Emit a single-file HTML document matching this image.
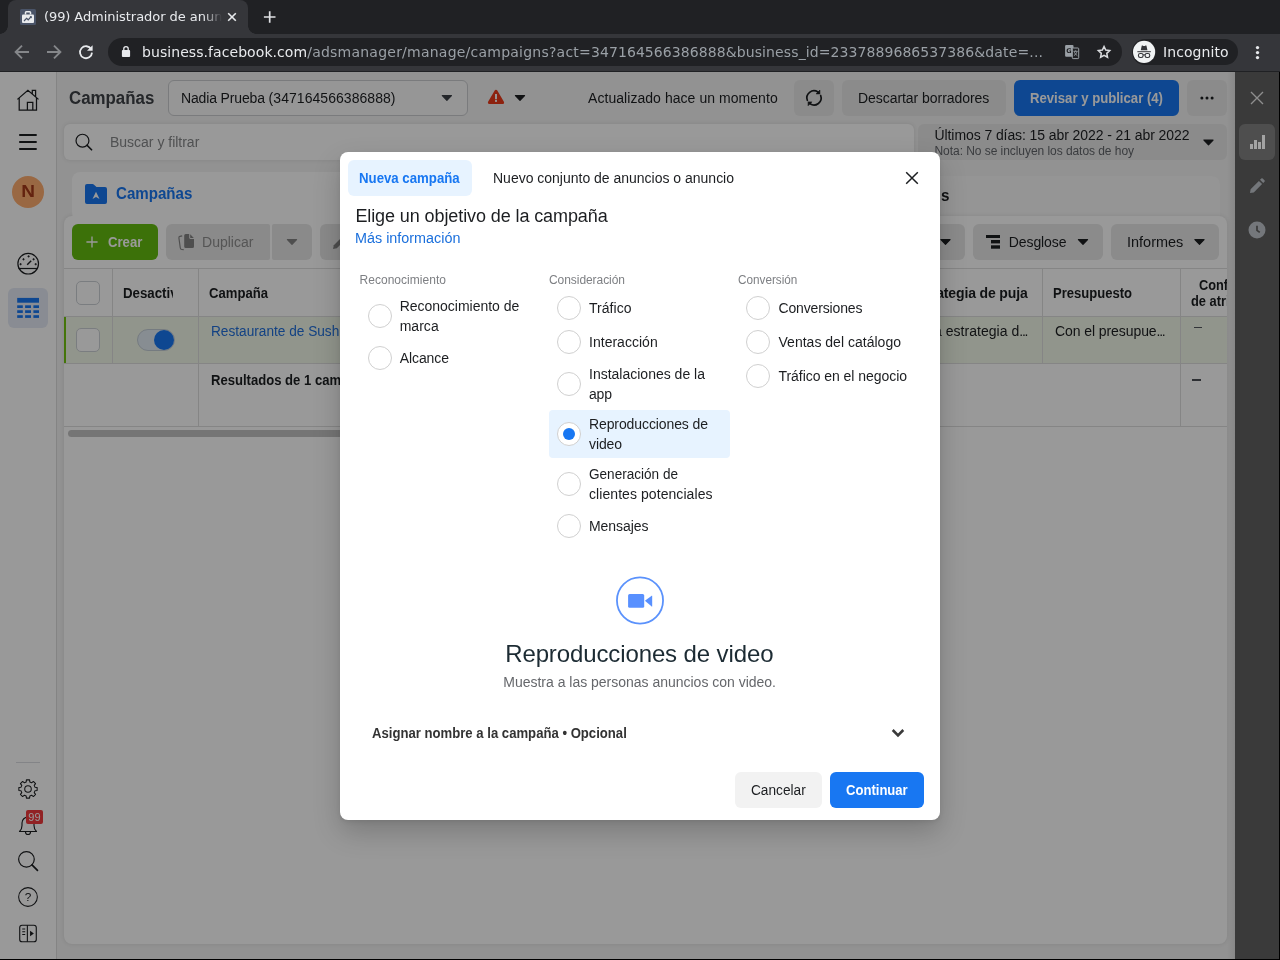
<!DOCTYPE html>
<html lang="es"><head><meta charset="utf-8"><title>(99) Administrador de anuncios</title>
<style>
*{box-sizing:border-box;margin:0;padding:0}
html,body{width:1280px;height:960px;overflow:hidden;background:#999;font-family:"Liberation Sans",sans-serif}
.a{position:absolute}
svg{position:absolute;overflow:visible}
#chrome{position:absolute;left:0;top:0;width:1280px;height:72px;background:#35363a;font-family:"DejaVu Sans",sans-serif}
#tabstrip{position:absolute;left:0;top:0;width:1280px;height:34px;background:#202124}
#tab{position:absolute;left:8px;top:0;width:240px;height:34px;background:#35363a;border-radius:8px 8px 0 0}
#tab:before,#tab:after{content:"";position:absolute;bottom:0;width:8px;height:8px}
#tab:before{left:-8px;background:radial-gradient(circle at 0 0,transparent 7.5px,#35363a 8px)}
#tab:after{right:-8px;background:radial-gradient(circle at 100% 0,transparent 7.5px,#35363a 8px)}
#omni{position:absolute;left:108px;top:38px;width:1014px;height:28px;border-radius:14px;background:#202124}
#incog{position:absolute;left:1132px;top:39px;width:106px;height:26px;border-radius:13px;background:#202124}
#chromeline{position:absolute;left:0;top:71px;width:1280px;height:1px;background:#202124}
#page{position:absolute;left:0;top:0;width:1279px;height:959px;overflow:hidden;background:#f3f3f3}
#overlay{position:absolute;left:0;top:72px;width:1279px;height:887px;background:rgba(0,0,0,.4)}
#edge-b{position:absolute;left:0;top:959px;width:1280px;height:1px;background:#000}
#edge-r{position:absolute;left:1279px;top:72px;width:1px;height:888px;background:#000}
.box{position:absolute}
#root{position:absolute;left:0;top:0;width:1280px;height:960px;overflow:hidden;-webkit-mask-image:linear-gradient(#000,#000);mask-image:linear-gradient(#000,#000)}
#modal{position:absolute;left:340px;top:152px;width:600px;height:668px;border-radius:8px;background:#fff;box-shadow:0 12px 28px rgba(0,0,0,.2),0 2px 4px rgba(0,0,0,.08)}
.radio{width:24px;height:24px;border-radius:50%;border:1px solid #d0d0d0;background:#fff}
#side{position:absolute;left:0;top:72px;width:57px;height:887px;background:#fff;border-right:1px solid #dcdcdc}
.btn{border-radius:6px;background:#e8e8e8}
.dis{background:#e6e6e6}
.card{background:#fff;box-shadow:0 0 4px rgba(0,0,0,.1)}
.hl{height:1px;background:#dedede}
.vl{width:1px;background:#dedede}
.cb{width:24px;height:24px;border-radius:5px;border:1px solid #ccd0d5;background:#fff}
#rside{position:absolute;left:1235px;top:72px;width:44px;height:887px;background:#3a3a3a}
#rshadow{position:absolute;left:1227px;top:72px;width:8px;height:887px;background:linear-gradient(90deg,rgba(0,0,0,0),rgba(0,0,0,.07))}

</style></head>
<body>
<div id="root">
<div id="page">
<div id="side"></div>
<svg style="left:17px;top:89px" width="22" height="22"><path d="M.4 10.4L10.9 1.3 21.5 10.4M2.2 8.9V21.2H19.5V8.9M15.3 5V1.3H18.6V7.8M10.4 21.2V13.4H15.8V21.2" fill="none" stroke="#1c1e21" stroke-width="1.25" stroke-linejoin="miter"/></svg>
<svg style="left:19px;top:134px" width="18" height="16"><path d="M.2 1H17.7M.2 8H17.7M.2 15H17.7" stroke="#1c1e21" stroke-width="1.9"/></svg>
<div class="a" style="left:12px;top:176px;width:32px;height:32px;border-radius:50%;background:#ffae70"></div>
<span style="position:absolute;left:21.8px;top:181.109px;font:700 17px/22px 'Liberation Sans',sans-serif;color:#a63a1a;white-space:pre;transform:scaleX(1.12);transform-origin:50% 50%;width:12.5px;text-align:center;">N</span>
<svg style="left:16px;top:251px" width="25" height="25"><g transform="translate(0.2 0.7)"><circle cx="12" cy="12" r="10.3" fill="none" stroke="#1c1e21" stroke-width="1.2"/><path d="M2.3 16.8h19.4" stroke="#1c1e21" stroke-width="1.2"/><path d="M11 13l4-3.9" stroke="#1c1e21" stroke-width="1.4"/><path d="M3.3 12.5h2.2M4.4 11.4v2.2" stroke="#1c1e21" stroke-width=".9"/><path d="M6.2 7.6h2.2M7.3 6.5v2.2" stroke="#1c1e21" stroke-width=".9"/><path d="M11.3 4.7h2.2M12.4 3.6v2.2" stroke="#1c1e21" stroke-width=".9"/><path d="M16.3 7.6h2.2M17.4 6.5v2.2" stroke="#1c1e21" stroke-width=".9"/><path d="M18.4 12.5h2.2M19.5 11.4v2.2" stroke="#1c1e21" stroke-width=".9"/></g></svg>
<div class="a" style="left:8px;top:288px;width:40px;height:40px;border-radius:6px;background:#e5eaf5"></div>
<svg style="left:17px;top:297px" width="23" height="21"><g transform="translate(0.2 0.9)"><rect x="0" y="0" width="21.8" height="4.8" fill="#1877f2"/><rect x="0" y="7.4" width="5.6" height="2.7" fill="#1877f2"/><rect x="7.9" y="7.4" width="5.9" height="2.7" fill="#1877f2"/><rect x="16.2" y="7.4" width="5.6" height="2.7" fill="#1877f2"/><rect x="0" y="12.35" width="5.6" height="2.7" fill="#1877f2"/><rect x="7.9" y="12.35" width="5.9" height="2.7" fill="#1877f2"/><rect x="16.2" y="12.35" width="5.6" height="2.7" fill="#1877f2"/><rect x="0" y="17.3" width="5.6" height="2.7" fill="#1877f2"/><rect x="7.9" y="17.3" width="5.9" height="2.7" fill="#1877f2"/><rect x="16.2" y="17.3" width="5.6" height="2.7" fill="#1877f2"/></g></svg>
<div class="a" style="left:16px;top:762px;width:24px;height:1px;background:#dadde1"></div>
<svg style="left:18px;top:779px" width="20" height="20"><g transform="scale(0.909)"><path d="M8.97 3.37L9.27 0.95L12.73 0.95L13.03 3.37L14.96 4.17L16.89 2.67L19.33 5.11L17.83 7.04L18.63 8.97L21.05 9.27L21.05 12.73L18.63 13.03L17.83 14.96L19.33 16.89L16.89 19.33L14.96 17.83L13.03 18.63L12.73 21.05L9.27 21.05L8.97 18.63L7.04 17.83L5.11 19.33L2.67 16.89L4.17 14.96L3.37 13.03L0.95 12.73L0.95 9.27L3.37 8.97L4.17 7.04L2.67 5.11L5.11 2.67L7.04 4.17Z" fill="none" stroke="#1c1e21" stroke-width="1.15" stroke-linejoin="round"/><circle cx="11" cy="11" r="3.6" fill="none" stroke="#1c1e21" stroke-width="1.15"/></g></svg>
<svg style="left:18px;top:814px" width="20" height="22"><path d="M1.5 17.5c1.8-1.6 2.5-3.5 2.5-6V9a6 6 0 0 1 12 0v2.5c0 2.5.7 4.4 2.5 6z" fill="none" stroke="#1c1e21" stroke-width="1.15" stroke-linejoin="round"/><path d="M7.5 18a2.5 2.5 0 0 0 5 0" fill="none" stroke="#1c1e21" stroke-width="1.15"/></svg>
<div class="a" style="left:26px;top:810px;width:17px;height:14px;border-radius:2px;background:#f23a3c"></div>
<span style="position:absolute;left:28.3px;top:811.389px;font:400 11px/12px 'Liberation Sans',sans-serif;letter-spacing:0.15px;color:#fff;white-space:pre;">99</span>
<svg style="left:18px;top:850px" width="20" height="21"><g transform="translate(0 0.9) scale(0.909)"><circle cx="9.3" cy="9.3" r="8.6" fill="none" stroke="#1c1e21" stroke-width="1.32"/><path d="M15.4 15.4l6 6" stroke="#1c1e21" stroke-width="1.87" stroke-linecap="round"/></g></svg>
<svg style="left:18px;top:887px" width="20" height="20"><g transform="scale(0.909)"><circle cx="11" cy="11" r="10.3" fill="none" stroke="#1c1e21" stroke-width="1.15"/><text x="11" y="15.5" text-anchor="middle" font-family="Liberation Sans,sans-serif" font-size="13" fill="#1c1e21">?</text></g></svg>
<svg style="left:19px;top:924px" width="18" height="19"><g transform="translate(0 0.5) scale(0.9)"><rect x=".8" y=".8" width="18.4" height="18.4" rx="2.6" fill="none" stroke="#1c1e21" stroke-width="1.25"/><path d="M9.3 .8v18.4" stroke="#1c1e21" stroke-width="1.25"/><path d="M3.6 5h3.3M3.6 8h3.3M3.6 11h3.3" stroke="#1c1e21" stroke-width="1.15"/><path d="M12.3 6.9l4.2 3.1-4.2 3.1z" fill="#1c1e21"/></g></svg>
<span style="position:absolute;left:69px;top:86.663px;font:700 18px/23px 'Liberation Sans',sans-serif;transform:scaleX(0.9369);transform-origin:0 50%;color:#3e4247;white-space:pre;">Campañas</span>
<div class="a" style="left:168px;top:80px;width:300px;height:36px;border-radius:6px;border:1px solid #cbcdd0;background:#fbfbfb"></div>
<div style="position:absolute;left:181px;top:89.149px;font:400 14px/18px 'Liberation Sans',sans-serif;white-space:pre;"><span style="color:#1c1e21;letter-spacing:-0.147px">Nadia Prueba </span><span style="color:#1c1e21;letter-spacing:0.051px">(347164566386888)</span></div>
<svg style="left:441px;top:94px" width="12" height="8"><g transform="translate(0.6 0.9)"><path d="M.7 .6H9.9L5.3 5.5z" fill="#3c4047" stroke="#3c4047" stroke-width="1.1" stroke-linejoin="round"/></g></svg>
<svg style="left:487px;top:89px" width="18" height="16"><g transform="translate(0.9 0.7)"><path d="M8.1 1.5L14.7 12.9H1.5z" fill="#ec3a1a" stroke="#ec3a1a" stroke-width="3" stroke-linejoin="round"/><path d="M8.1 4.3v5.2" stroke="#fff" stroke-width="1.9"/><rect x="7.15" y="10.3" width="1.9" height="1.9" fill="#fff"/></g></svg>
<svg style="left:514px;top:94px" width="12" height="8"><g transform="translate(0.7 0.9)"><path d="M.7 .6H9.9L5.3 5.5z" fill="#1c1e21" stroke="#1c1e21" stroke-width="1.1" stroke-linejoin="round"/></g></svg>
<span style="position:absolute;left:588px;top:89.149px;font:400 14px/18px 'Liberation Sans',sans-serif;letter-spacing:0.052px;color:#1c1e21;white-space:pre;">Actualizado hace un momento</span>
<div class="a btn" style="left:794px;top:80px;width:40px;height:36px"></div>
<svg style="left:805px;top:89px" width="18" height="18"><path d="M2.33 11.33A7.1 7.1 0 0 1 12.92 2.98M15.67 6.47A7.1 7.1 0 0 1 5.08 14.82" fill="none" stroke="#1c1e21" stroke-width="1.7" stroke-linecap="round"/><path d="M14.9 1.1V4.9H11.1zM3.1 16.7V12.9H6.9z" fill="#1c1e21" stroke="#1c1e21" stroke-width=".6" stroke-linejoin="round"/></svg>
<div class="a btn" style="left:842px;top:80px;width:164px;height:36px"></div>
<span style="position:absolute;left:858px;top:89.149px;font:400 14px/18px 'Liberation Sans',sans-serif;letter-spacing:-0.052px;color:#1c1e21;white-space:pre;">Descartar borradores</span>
<div class="a" style="left:1014px;top:80px;width:165px;height:36px;border-radius:6px;background:#1877f2"></div>
<span style="position:absolute;left:1030px;top:89.149px;font:700 14px/18px 'Liberation Sans',sans-serif;transform:scaleX(0.9391);transform-origin:0 50%;color:#fff;white-space:pre;">Revisar y publicar (4)</span>
<div class="a btn" style="left:1187px;top:80px;width:40px;height:36px"></div>
<svg style="left:1199px;top:96px" width="16" height="4"><circle cx="2.9" cy="2" r="1.5" fill="#1c1e21"/><circle cx="8" cy="2" r="1.5" fill="#1c1e21"/><circle cx="13.1" cy="2" r="1.5" fill="#1c1e21"/></svg>
<div class="a card" style="left:64px;top:124px;width:850px;height:36px;border-radius:6px"></div>
<svg style="left:75px;top:133px" width="17" height="18"><g transform="translate(0.5 0.7) scale(0.75)"><circle cx="9.3" cy="9.3" r="8.6" fill="none" stroke="#1c1e21" stroke-width="1.6"/><path d="M15.4 15.4l6 6" stroke="#1c1e21" stroke-width="2.27" stroke-linecap="round"/></g></svg>
<span style="position:absolute;left:110px;top:133.149px;font:400 14px/18px 'Liberation Sans',sans-serif;letter-spacing:-0.011px;color:#858789;white-space:pre;">Buscar y filtrar</span>
<div class="a btn" style="left:918px;top:124px;width:309px;height:36px"></div>
<span style="position:absolute;left:934.5px;top:126.449px;font:400 14px/18px 'Liberation Sans',sans-serif;letter-spacing:-0.085px;color:#1c1e21;white-space:pre;">Últimos 7 días: 15 abr 2022 - 21 abr 2022</span>
<span style="position:absolute;left:934.5px;top:142.842px;font:400 12px/16px 'Liberation Sans',sans-serif;letter-spacing:-0.054px;color:#62656a;white-space:pre;">Nota: No se incluyen los datos de hoy</span>
<svg style="left:1203px;top:139px" width="11" height="7"><g transform="translate(0.2 0.4)"><path d="M.7 .6H9.9L5.3 5.5z" fill="#1c1e21" stroke="#1c1e21" stroke-width="1.1" stroke-linejoin="round"/></g></svg>
<div class="a" style="left:72px;top:176px;width:1148px;height:48px;border-radius:8px 8px 0 0;background:#f8f8f8"></div>
<div class="a" style="left:72px;top:172px;width:383px;height:52px;border-radius:8px 8px 0 0;background:#fff"></div>
<svg style="left:85px;top:184px" width="22" height="20"><path d="M0 2a2 2 0 0 1 2-2h5.5a2 2 0 0 1 1.5.7L11.5 3H20a2 2 0 0 1 2 2v13a2 2 0 0 1-2 2H2a2 2 0 0 1-2-2z" fill="#1877f2"/><path d="M7.5 15L11 7.7l3.5 7.3-3.5-1.9z" fill="#fff"/></svg>
<span style="position:absolute;left:116px;top:182.756px;font:700 16px/21px 'Liberation Sans',sans-serif;transform:scaleX(0.9429);transform-origin:0 50%;color:#1877f2;white-space:pre;">Campañas</span>
<span style="position:absolute;left:502px;top:185.256px;font:700 16px/21px 'Liberation Sans',sans-serif;transform:scaleX(0.9497);transform-origin:0 50%;color:#1c1e21;white-space:pre;">Conjuntos de anuncios</span>
<div class="a" style="left:941px;top:0;width:30px;height:300px;overflow:hidden"><span style="position:absolute;left:-61.5px;top:185.256px;font:700 16px/21px 'Liberation Sans',sans-serif;transform:scaleX(0.9521);transform-origin:0 50%;color:#1c1e21;white-space:pre;">Anuncios</span></div>
<div class="a card" style="left:64px;top:216px;width:1163px;height:728px;border-radius:8px"></div>
<div class="a" style="left:73px;top:210px;width:380px;height:12px;background:#fff"></div>
<div class="a" style="left:72px;top:224px;width:86px;height:36px;border-radius:6px;background:#64bd10"></div>
<svg style="left:86px;top:236px" width="12" height="12"><path d="M6 .4v11.2M.4 6h11.2" stroke="#fff" stroke-width="1.35"/></svg>
<span style="position:absolute;left:108px;top:233.149px;font:700 14px/18px 'Liberation Sans',sans-serif;transform:scaleX(0.9373);transform-origin:0 50%;color:#fff;white-space:pre;">Crear</span>
<div class="a dis" style="left:166px;top:224px;width:104px;height:36px;border-radius:6px 2px 2px 6px"></div>
<svg style="left:178px;top:234px" width="16" height="17"><path d="M6.2 1.6a1.5 1.5 0 0 1 1.5-1.5h3.5v3.7a1.1 1.1 0 0 0 1.1 1.1h3.7v7.5a1.5 1.5 0 0 1-1.5 1.5h-6.8a1.5 1.5 0 0 1-1.5-1.5z" fill="#838383"/><path d="M12.2 .3l3.6 3.6h-3.1a.5 .5 0 0 1-.5-.5z" fill="#838383"/><path d="M4.2 1.9L1.9 2.4Q.7 2.7 .9 3.9L2.3 14Q2.5 15.4 3.9 15.5L5.8 15.7" fill="none" stroke="#838383" stroke-width="1.15"/></svg>
<span style="position:absolute;left:202px;top:233.149px;font:400 14px/18px 'Liberation Sans',sans-serif;letter-spacing:0.02px;color:#8e8e8e;white-space:pre;">Duplicar</span>
<div class="a dis" style="left:272px;top:224px;width:40px;height:36px;border-radius:2px 6px 6px 2px"></div>
<svg style="left:286px;top:238px" width="12" height="8"><g transform="translate(0.7 0.9)"><path d="M.7 .6H9.9L5.3 5.5z" fill="#838383" stroke="#838383" stroke-width="1.1" stroke-linejoin="round"/></g></svg>
<div class="a dis" style="left:320px;top:224px;width:94px;height:36px;border-radius:6px 0 0 6px"></div>
<svg style="left:333px;top:235px" width="14" height="14"><path d="M0 14l.8-3.8L9.5 1.5l3 3-8.7 8.7z" fill="#838383"/></svg>
<span style="position:absolute;left:356px;top:233.149px;font:400 14px/18px 'Liberation Sans',sans-serif;letter-spacing:0.084px;color:#8e8e8e;white-space:pre;">Editar</span>
<div class="a btn" style="left:860px;top:224px;width:105px;height:36px"></div>
<svg style="left:940px;top:238px" width="11" height="8"><g transform="translate(0.2 0.9)"><path d="M.7 .6H9.9L5.3 5.5z" fill="#1c1e21" stroke="#1c1e21" stroke-width="1.1" stroke-linejoin="round"/></g></svg>
<div class="a btn" style="left:973px;top:224px;width:130px;height:36px"></div>
<svg style="left:986px;top:235px" width="14" height="14"><rect x="0" y="0" width="14" height="3" fill="#1c1e21"/><rect x="5" y="5" width="9" height="3.4" fill="#1c1e21"/><rect x="5" y="10.3" width="9" height="3.4" fill="#1c1e21"/></svg>
<span style="position:absolute;left:1008.8px;top:232.749px;font:400 14px/18px 'Liberation Sans',sans-serif;letter-spacing:-0.096px;color:#1c1e21;white-space:pre;">Desglose</span>
<svg style="left:1077px;top:238px" width="12" height="8"><g transform="translate(0.7 0.9)"><path d="M.7 .6H9.9L5.3 5.5z" fill="#1c1e21" stroke="#1c1e21" stroke-width="1.1" stroke-linejoin="round"/></g></svg>
<div class="a btn" style="left:1111px;top:224px;width:108px;height:36px"></div>
<span style="position:absolute;left:1127px;top:232.749px;font:400 14px/18px 'Liberation Sans',sans-serif;transform:scaleX(1.0336);transform-origin:0 50%;color:#1c1e21;white-space:pre;">Informes</span>
<svg style="left:1194px;top:238px" width="11" height="8"><g transform="translate(0.2 0.9)"><path d="M.7 .6H9.9L5.3 5.5z" fill="#1c1e21" stroke="#1c1e21" stroke-width="1.1" stroke-linejoin="round"/></g></svg>
<div class="a" style="left:64px;top:316px;width:1163px;height:47px;background:#f2f8e9"></div>
<div class="a" style="left:64px;top:316px;width:2px;height:47px;background:#72c410"></div>
<div class="a hl" style="left:64px;top:268px;width:1163px"></div>
<div class="a hl" style="left:64px;top:316px;width:1163px"></div>
<div class="a hl" style="left:64px;top:363px;width:1163px"></div>
<div class="a hl" style="left:64px;top:426px;width:1163px"></div>
<div class="a vl" style="left:112px;top:268px;height:95px"></div>
<div class="a vl" style="left:198px;top:268px;height:158px"></div>
<div class="a vl" style="left:1042px;top:268px;height:95px"></div>
<div class="a vl" style="left:1180px;top:268px;height:158px"></div>
<div class="a cb" style="left:76px;top:281px"></div>
<div class="a cb" style="left:76px;top:328px"></div>
<div class="a" style="left:123px;top:282px;width:50px;height:22px;overflow:hidden"><span style="position:absolute;left:0.3px;top:2.149px;font:700 14px/18px 'Liberation Sans',sans-serif;transform:scaleX(0.9481);transform-origin:0 50%;color:#1c1e21;white-space:pre;">Desactivado</span></div>
<span style="position:absolute;left:209.3px;top:284.149px;font:700 14px/18px 'Liberation Sans',sans-serif;transform:scaleX(0.936);transform-origin:0 50%;color:#1c1e21;white-space:pre;">Campaña</span>
<span style="position:absolute;left:909.5px;top:284.149px;font:700 14px/18px 'Liberation Sans',sans-serif;letter-spacing:-0.141px;color:#1c1e21;white-space:pre;">Estrategia de puja</span>
<span style="position:absolute;left:1053.3px;top:284.149px;font:700 14px/18px 'Liberation Sans',sans-serif;transform:scaleX(0.9315);transform-origin:0 50%;color:#1c1e21;white-space:pre;">Presupuesto</span>
<div class="a" style="left:1180px;top:274px;width:47px;height:36px;overflow:hidden"><span style="position:absolute;left:18.5px;top:1.549px;font:700 14px/18px 'Liberation Sans',sans-serif;transform:scaleX(0.9116);transform-origin:0 50%;color:#1c1e21;white-space:pre;">Configuración</span><span style="position:absolute;left:11.3px;top:17.549px;font:700 14px/18px 'Liberation Sans',sans-serif;transform:scaleX(0.918);transform-origin:0 50%;color:#1c1e21;white-space:pre;">de atribución</span></div>
<div class="a" style="left:137px;top:329px;width:38px;height:22px;border-radius:11px;background:#e1ecf4;border:1px solid #c4cdd6"></div>
<div class="a" style="left:154px;top:330px;width:20px;height:20px;border-radius:50%;background:#1877f2"></div>
<span style="position:absolute;left:211px;top:321.749px;font:400 14px/18px 'Liberation Sans',sans-serif;transform:scaleX(0.9752);transform-origin:0 50%;color:#216fdb;white-space:pre;">Restaurante de Sushi</span>
<div style="position:absolute;left:897.3px;top:322.349px;font:400 14px/18px 'Liberation Sans',sans-serif;white-space:pre;"><span style="color:#1c1e21;letter-spacing:0.03px">Usar la estrategia d</span><span style="color:#1c1e21;letter-spacing:-1.257px">...</span></div>
<div style="position:absolute;left:1055px;top:322.349px;font:400 14px/18px 'Liberation Sans',sans-serif;white-space:pre;"><span style="color:#1c1e21;letter-spacing:-0.077px">Con el presupue</span><span style="color:#1c1e21;letter-spacing:-1.257px">...</span></div>
<div class="a" style="left:1194px;top:327px;width:8px;height:1px;background:#54585e"></div>
<span style="position:absolute;left:211px;top:370.749px;font:700 14px/18px 'Liberation Sans',sans-serif;transform:scaleX(0.934);transform-origin:0 50%;color:#1c1e21;white-space:pre;">Resultados de 1 campaña</span>
<div class="a" style="left:1192px;top:379px;width:9px;height:2px;background:#4b4f56"></div>
<div class="a" style="left:68px;top:430px;width:560px;height:7px;border-radius:4px;background:#c4c4c4"></div>
<div id="overlay"></div>
<div id="rshadow"></div>
<div id="rside"></div>
<svg style="left:1249px;top:90px" width="16" height="16"><path d="M2 2l12 12M14 2L2 14" stroke="#8e8e8e" stroke-width="1.4" fill="none"/></svg>
<div class="a" style="left:1239px;top:124px;width:36px;height:36px;border-radius:6px;background:#4e4e4e"></div>
<svg style="left:1249px;top:134px" width="16" height="16"><g fill="#a3a3a3"><rect x="1" y="10" width="3" height="5"/><rect x="5" y="6" width="3" height="9"/><rect x="9" y="8" width="3" height="7"/><rect x="13" y="1" width="3" height="14"/></g></svg>
<svg style="left:1249px;top:178px" width="16" height="16"><path d="M1 15l.6-3.8 8.3-8.3 3.2 3.2-8.3 8.3zM11 1.8l1.3-1.3a1 1 0 0 1 1.4 0l1.8 1.8a1 1 0 0 1 0 1.4l-1.3 1.3z" fill="#74777b"/></svg>
<svg style="left:1248px;top:221px" width="18" height="18"><g transform="translate(0.5 0.5) scale(1.062)"><circle cx="8" cy="8" r="8" fill="#74777b"/><path d="M8 4v4.3l2.6 2" stroke="#3a3a3a" stroke-width="1.6" fill="none"/></g></svg>
<div id="modal"></div>
<div class="a" style="left:348px;top:160px;width:124px;height:36px;border-radius:6px;background:#e7f3ff"></div>
<span style="position:absolute;left:358.9px;top:169.149px;font:700 14px/18px 'Liberation Sans',sans-serif;transform:scaleX(0.9446);transform-origin:0 50%;color:#1877f2;white-space:pre;">Nueva campaña</span>
<span style="position:absolute;left:493px;top:169.149px;font:400 14px/18px 'Liberation Sans',sans-serif;letter-spacing:-0.008px;color:#1c1e21;white-space:pre;">Nuevo conjunto de anuncios o anuncio</span>
<svg style="left:904px;top:170px" width="16" height="16"><path d="M2.2 2.2l11.6 11.6M13.8 2.2L2.2 13.8" stroke="#1c1e21" stroke-width="1.5" fill="none"/></svg>
<span style="position:absolute;left:355.4px;top:204.763px;font:400 18px/23px 'Liberation Sans',sans-serif;letter-spacing:-0.096px;color:#1c1e21;white-space:pre;">Elige un objetivo de la campaña</span>
<span style="position:absolute;left:355.3px;top:229.149px;font:400 14px/18px 'Liberation Sans',sans-serif;transform:scaleX(1.0263);transform-origin:0 50%;color:#1a6fdc;white-space:pre;">Más información</span>
<span style="position:absolute;left:359.5px;top:272.042px;font:400 12px/16px 'Liberation Sans',sans-serif;letter-spacing:0.035px;color:#7d7f83;white-space:pre;">Reconocimiento</span>
<span style="position:absolute;left:549px;top:272.042px;font:400 12px/16px 'Liberation Sans',sans-serif;letter-spacing:-0.06px;color:#7d7f83;white-space:pre;">Consideración</span>
<span style="position:absolute;left:738.3px;top:272.042px;font:400 12px/16px 'Liberation Sans',sans-serif;transform:scaleX(0.9785);transform-origin:0 50%;color:#7d7f83;white-space:pre;">Conversión</span>
<div class="a radio" style="left:368px;top:304px"></div>
<span style="position:absolute;left:399.7px;top:297.349px;font:400 14px/18px 'Liberation Sans',sans-serif;letter-spacing:-0.016px;color:#1c1e21;white-space:pre;">Reconocimiento de</span>
<span style="position:absolute;left:399.7px;top:317.349px;font:400 14px/18px 'Liberation Sans',sans-serif;letter-spacing:0.023px;color:#1c1e21;white-space:pre;">marca</span>
<div class="a radio" style="left:368px;top:346px"></div>
<span style="position:absolute;left:399.7px;top:349.149px;font:400 14px/18px 'Liberation Sans',sans-serif;letter-spacing:-0.085px;color:#1c1e21;white-space:pre;">Alcance</span>
<div class="a" style="left:549px;top:410px;width:181px;height:48px;border-radius:4px;background:#e7f3ff"></div>
<div class="a radio" style="left:557px;top:296px"></div>
<span style="position:absolute;left:589px;top:299.149px;font:400 14px/18px 'Liberation Sans',sans-serif;letter-spacing:0.036px;color:#1c1e21;white-space:pre;">Tráfico</span>
<div class="a radio" style="left:557px;top:330px"></div>
<span style="position:absolute;left:589px;top:333.149px;font:400 14px/18px 'Liberation Sans',sans-serif;letter-spacing:0.022px;color:#1c1e21;white-space:pre;">Interacción</span>
<div class="a radio" style="left:557px;top:372px"></div>
<span style="position:absolute;left:589px;top:365.149px;font:400 14px/18px 'Liberation Sans',sans-serif;color:#1c1e21;white-space:pre;">Instalaciones de la</span>
<span style="position:absolute;left:589px;top:385.149px;font:400 14px/18px 'Liberation Sans',sans-serif;letter-spacing:-0.18px;color:#1c1e21;white-space:pre;">app</span>
<div class="a radio" style="left:557px;top:422px"></div><div class="a" style="left:563px;top:428px;width:12px;height:12px;border-radius:50%;background:#1877f2"></div>
<span style="position:absolute;left:589px;top:415.149px;font:400 14px/18px 'Liberation Sans',sans-serif;letter-spacing:-0.103px;color:#1c1e21;white-space:pre;">Reproducciones de</span>
<span style="position:absolute;left:589px;top:435.149px;font:400 14px/18px 'Liberation Sans',sans-serif;letter-spacing:-0.117px;color:#1c1e21;white-space:pre;">video</span>
<div class="a radio" style="left:557px;top:472px"></div>
<span style="position:absolute;left:589px;top:465.149px;font:400 14px/18px 'Liberation Sans',sans-serif;transform:scaleX(0.969);transform-origin:0 50%;color:#1c1e21;white-space:pre;">Generación de</span>
<span style="position:absolute;left:589px;top:485.149px;font:400 14px/18px 'Liberation Sans',sans-serif;letter-spacing:0.069px;color:#1c1e21;white-space:pre;">clientes potenciales</span>
<div class="a radio" style="left:557px;top:514px"></div>
<span style="position:absolute;left:589px;top:517.149px;font:400 14px/18px 'Liberation Sans',sans-serif;letter-spacing:-0.06px;color:#1c1e21;white-space:pre;">Mensajes</span>
<div class="a radio" style="left:746px;top:296px"></div>
<span style="position:absolute;left:778.5px;top:299.149px;font:400 14px/18px 'Liberation Sans',sans-serif;letter-spacing:-0.146px;color:#1c1e21;white-space:pre;">Conversiones</span>
<div class="a radio" style="left:746px;top:330px"></div>
<span style="position:absolute;left:778.5px;top:333.149px;font:400 14px/18px 'Liberation Sans',sans-serif;letter-spacing:0.016px;color:#1c1e21;white-space:pre;">Ventas del catálogo</span>
<div class="a radio" style="left:746px;top:364px"></div>
<span style="position:absolute;left:778.5px;top:367.149px;font:400 14px/18px 'Liberation Sans',sans-serif;letter-spacing:-0.048px;color:#1c1e21;white-space:pre;">Tráfico en el negocio</span>
<svg style="left:616px;top:576px" width="48" height="49"><g transform="translate(0 0.5)">
<circle cx="24" cy="24" r="23.05" fill="#fff" stroke="#5b92fc" stroke-width="1.8"/>
<rect x="12.1" y="17.4" width="16.1" height="13.9" rx="1.5" fill="#5890ff"/>
<path d="M28.9 24.3L35.7 19.2q.5-.3 .5 .3V29.8q0 .6-.5 .3z" fill="#5890ff"/>
</g></svg>
<span style="position:absolute;left:505.2px;top:638.184px;font:400 24px/31px 'Liberation Sans',sans-serif;letter-spacing:-0.116px;color:#1c2b33;white-space:pre;">Reproducciones de video</span>
<span style="position:absolute;left:503.3px;top:673.149px;font:400 14px/18px 'Liberation Sans',sans-serif;letter-spacing:-0.012px;color:#65676b;white-space:pre;">Muestra a las personas anuncios con video.</span>
<span style="position:absolute;left:371.5px;top:724.349px;font:700 14px/18px 'Liberation Sans',sans-serif;transform:scaleX(0.9376);transform-origin:0 50%;color:#333;white-space:pre;">Asignar nombre a la campaña • Opcional</span>
<svg style="left:890px;top:725px" width="16" height="16"><path d="M2.7 5l5.3 5.3L13.3 5" stroke="#3a3a3a" stroke-width="2.6" fill="none"/></svg>
<div class="a" style="left:735px;top:772px;width:87px;height:36px;border-radius:6px;background:#f2f2f2"></div>
<span style="position:absolute;left:751.3px;top:781.149px;font:400 14px/18px 'Liberation Sans',sans-serif;transform:scaleX(0.9762);transform-origin:0 50%;color:#1c1e21;white-space:pre;">Cancelar</span>
<div class="a" style="left:830px;top:772px;width:94px;height:36px;border-radius:6px;background:#1877f2"></div>
<span style="position:absolute;left:846px;top:781.149px;font:700 14px/18px 'Liberation Sans',sans-serif;transform:scaleX(0.9333);transform-origin:0 50%;color:#fff;white-space:pre;">Continuar</span>
</div>
<div id="chrome">
<div id="tabstrip"></div><div id="tab"></div>
<svg style="left:20px;top:9px" width="16" height="16">
<rect x="0" y="0" width="16" height="16" rx="1.5" fill="#4a5468"/>
<rect x="2" y="5.5" width="12" height="8.5" rx="1" fill="#e9ebee"/>
<path d="M5.5 5.5V3.6a.8.8 0 0 1 .8-.8h3.4a.8.8 0 0 1 .8.8v1.9" fill="none" stroke="#e9ebee" stroke-width="1.5"/>
<path d="M4 12l2.6-2.6 1.6 1.4 3-3.3" fill="none" stroke="#4a5468" stroke-width="1.2"/>
<path d="M9.6 7.2h2.2v2.2z" fill="#4a5468"/>
</svg>
<div class="a" style="left:0;top:0;width:226px;height:34px;overflow:hidden;-webkit-mask-image:linear-gradient(90deg,#000 0,#000 204px,transparent 222px);mask-image:linear-gradient(90deg,#000 0,#000 204px,transparent 222px)"><div style="position:absolute;left:44px;top:7.702px;font:400 13px/18px 'DejaVu Sans',sans-serif;white-space:pre;"><span style="color:#e8eaed;letter-spacing:-0.106px">(99) </span><span style="color:#e8eaed;letter-spacing:-0.047px">Administrador de </span><span style="color:#e8eaed;">anuncios</span></div></div>
<svg style="left:224px;top:9px" width="16" height="16"><path d="M4.2 4.2l7.6 7.6M11.8 4.2l-7.6 7.6" stroke="#e8eaed" stroke-width="1.6" fill="none"/></svg>
<svg style="left:261px;top:9px" width="17" height="16"><g transform="translate(0.7 0)"><path d="M8 2.2v11.6M2.2 8h11.6" stroke="#dfe1e4" stroke-width="1.7" fill="none"/></g></svg>
<svg style="left:14px;top:44px" width="16" height="16"><path d="M15 8H2.4M8 1.6L1.6 8 8 14.4" stroke="#85878a" stroke-width="1.9" fill="none"/></svg>
<svg style="left:46px;top:44px" width="16" height="16"><path d="M1 8h12.6M8 1.6L14.4 8 8 14.4" stroke="#85878a" stroke-width="1.9" fill="none"/></svg>
<svg style="left:78px;top:44px" width="16" height="16"><path d="M13.2 5.2A6 6 0 1 0 14 8.6" stroke="#e8eaed" stroke-width="1.8" fill="none"/><path d="M14.6 1.2v5.6H9z" fill="#e8eaed"/></svg>
<div id="omni"></div>
<svg style="left:121px;top:45px" width="10" height="13"><g transform="translate(0.5 0.9)"><rect x="0.4" y="4.2" width="8.2" height="6.9" rx="0.9" fill="#e8eaed"/><path d="M2.3 4.6V2.9a2.2 2.2 0 0 1 4.4 0v1.7" fill="none" stroke="#e8eaed" stroke-width="1.3"/></g></svg>
<div style="position:absolute;left:142px;top:43.056px;font:400 14px/18px 'DejaVu Sans',sans-serif;white-space:pre;"><span style="color:#e8eaed;letter-spacing:0.068px">business.facebook.com</span><span style="color:#9aa0a6;letter-spacing:0.228px">/adsmanager/manage/campaigns?act=</span><span style="color:#9aa0a6;letter-spacing:0.073px">347164566386888</span><span style="color:#9aa0a6;letter-spacing:0.111px">&amp;business_id=</span><span style="color:#9aa0a6;letter-spacing:0.068px">2337889686537386</span><span style="color:#9aa0a6;letter-spacing:0.158px">&amp;date=...</span></div>
<svg style="left:1065px;top:45px" width="14" height="14">
<rect x="0.1" y="0.1" width="8.4" height="11.7" rx="1" fill="#9aa0a6"/>
<rect x="7.3" y="3" width="6.4" height="10.6" rx="0.8" fill="#202124" stroke="#9aa0a6" stroke-width="1"/>
<text x="1.3" y="8.3" font-family="DejaVu Sans,sans-serif" font-size="6.5" font-weight="700" fill="#202124">G</text>
<path d="M8.6 6.3h4M10.6 5.4v.9M9.2 6.5c.5 1.7 1.5 3.1 3.1 4.2M12 6.5c-.5 1.7-1.5 3.1-3.1 4.2" stroke="#9aa0a6" stroke-width=".9" fill="none"/>
</svg>
<svg style="left:1096px;top:44px" width="16" height="16"><g transform="translate(0.8 0.7) scale(0.806)"><path d="M9 2.2l2.1 4.5 4.9.6-3.6 3.4.9 4.9L9 13.2 4.7 15.6l.9-4.9L2 7.3l4.9-.6z" fill="none" stroke="#d9dbde" stroke-width="1.9" stroke-linejoin="miter"/></g></svg>
<div id="incog"></div>
<svg style="left:1133px;top:40px" width="23" height="23"><g transform="translate(0 0.8) scale(1.009)">
<circle cx="11" cy="11" r="11" fill="#f1f3f4"/>
<path d="M7.7 9.4l.9-4.3c.1-.5.5-.6.9-.4l.8.4c.5.2.9.2 1.4 0l.8-.4c.4-.2.8-.1.9.4l.9 4.3z" fill="#35363a"/>
<rect x="4.3" y="10.3" width="13.4" height="1" fill="#35363a"/>
<rect x="5.4" y="12.6" width="4.6" height="4" rx="1.7" fill="none" stroke="#35363a" stroke-width="1.1"/>
<rect x="12" y="12.6" width="4.6" height="4" rx="1.7" fill="none" stroke="#35363a" stroke-width="1.1"/>
<path d="M10 14.1q1-.6 2 0" stroke="#35363a" stroke-width="1" fill="none"/>
</g></svg>
<span style="position:absolute;left:1163px;top:42.5px;font:400 14px/18px 'DejaVu Sans',sans-serif;letter-spacing:0.066px;color:#e8eaed;white-space:pre;">Incognito</span>
<svg style="left:1249px;top:44px" width="16" height="16"><circle cx="8.5" cy="3.6" r="1.65" fill="#e8eaed"/><circle cx="8.5" cy="8.6" r="1.65" fill="#e8eaed"/><circle cx="8.5" cy="13.6" r="1.65" fill="#e8eaed"/></svg>
<div id="chromeline"></div>
</div><div id="edge-b"></div><div id="edge-r"></div>
</div>
</body></html>
